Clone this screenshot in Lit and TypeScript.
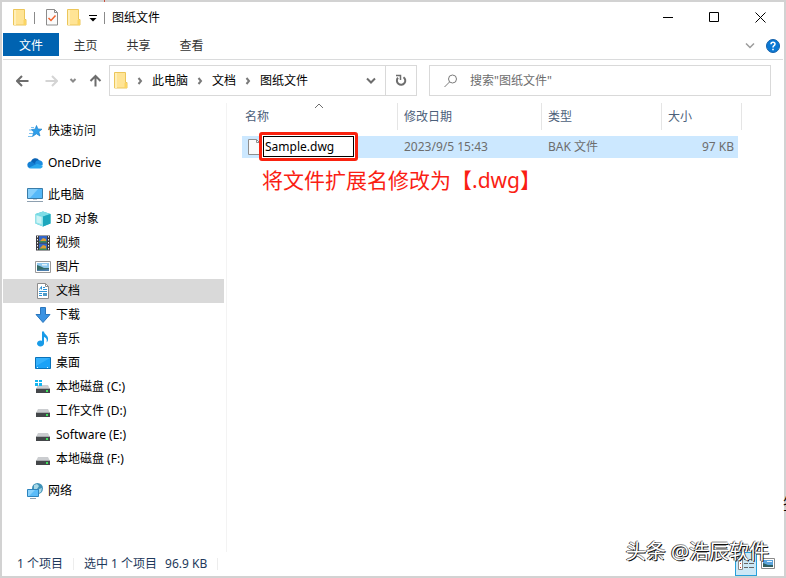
import { LitElement, html, css, svg, TemplateResult } from "lit";
import { customElement } from "lit/decorators.js";
import { classMap } from "lit/directives/class-map.js";

const icon = (w: number, h: number, body: unknown) =>
  html`<svg width=${w} height=${h} viewBox="0 0 ${w} ${h}" aria-hidden="true">${body}</svg>`;

const folder = icon(14, 17, svg`
  <path d="M0.5 0.5h11v10h1.5v5.5h-12.5z" fill="#ffe495" stroke="#ecc65a"/>
  <path d="M10.5 11h2.5v5h-2.5z" fill="#fbd563"/><path d="M1 1h2v15h-2z" fill="#ffefb8"/>`);

const checkDoc = icon(14, 17, svg`
  <path d="M1.5 0.5h8l3 3v12.5h-11z" fill="#fbfbfb" stroke="#8c8c8c"/>
  <path d="M9.5 0.5v3h3" fill="none" stroke="#8c8c8c"/>
  <path d="M3.500 9l2.500 2.500 4.500-5" fill="none" stroke="#f0632d" stroke-width="1.500"/>`);

const star = icon(16, 16, svg`
  <path d="M9.500 2.500l1.400 3.500 4.100.2-3.200 2.600 1.200 4.200-3.600-2.200-3.900 2.700 1.400-4.500-2.700-2.500 3.900-.3z" fill="#2f9fea" stroke="#1983d0" stroke-width=".7"/>
  <path d="M4 4.500h3M2 7h3M2 10.500h4M1 13.500h4" stroke="#7cc0ee"/>`);

const cloud = icon(16, 16, svg`
  <path d="M4 7a4.500 4.500 0 0 1 8.300-1.500l-2 5-8 .5z" fill="#0a63b5"/>
  <path d="M0.300 9.800a3.500 3.500 0 0 1 4.200-3.300l6 4-8 2.800a3.500 3.500 0 0 1-2.200-3.500z" fill="#1480d4"/>
  <path d="M8 8.500a4 4 0 0 1 4.500-3.200 4 4 0 0 1 3.200 4.500l-4 2z" fill="#1c8de0"/>
  <path d="M2 12.800l8-4 5.800 2a2.700 2.700 0 0 1-2.300 2.700h-10a3 3 0 0 1-1.500-.7z" fill="#29a8ee"/>`);

const computer = icon(16, 16, svg`
  <path d="M0.500 1.500h15v10h-15z" fill="#55b8f8" stroke="#3a7ca8"/>
  <path d="M1 2h10l-8 9h-2z" fill="#86cffb"/>
  <path d="M6 12.500h4" stroke="#c5cfd8"/><path d="M0 14.500h16" stroke="#8ea0b0"/>`);

const cube = icon(16, 16, svg`
  <path d="M8 0.500l7.500 2.500v9.500l-7.500 3-7.500-3v-9.500z" fill="#35bfd0"/>
  <path d="M8 0.500l7.500 2.500-7.500 2.500-7.500-2.500z" fill="#7fdde6"/>
  <path d="M0.500 3l7.500 2.500v10l-7.500-3z" fill="#8fe3ea"/><path d="M1.500 4.500l5 1.500v7l-5-1.500z" fill="#cdf3f5"/>
  <path d="M8 5.500l7.500-2.500v9.500l-7.500 3z" fill="#1da7bd"/>`);

const film = icon(16, 16, svg`
  <path d="M1 0.500h14v15h-14z" fill="#3a3a40"/><path d="M4 1h8v6.500h-8zM4 8.500h8v6.500h-8z" fill="#3466c6"/>
  <path d="M5 6l3-3 3 1v3h-6zM5 13l3-3 3 1v3h-6z" fill="#dc9d32"/><path d="M4 6h8v1.500h-8zM4 13.500h8v1.500h-8z" fill="#3b8758"/>
  <path d="M2.500 1v14M13.500 1v14" stroke="#f4f4f4" stroke-dasharray="1.500 1.500"/>`);

const picture = icon(16, 16, svg`
  <path d="M0.500 2.500h15v11h-15z" fill="#fff" stroke="#9a9a9a"/>
  <path d="M2 4h12v8h-12z" fill="#8fc8ee"/><path d="M2 6l4 1.500 3 1.500h5v3h-12z" fill="#356c68"/>
  <path d="M2 11l12-1v2h-12z" fill="#4d7fae"/><path d="M7 5h5v1.500h-5z" fill="#e5f4fc"/>`);

const documentIcon = icon(16, 16, svg`
  <path d="M2.500 0.500h8l3 3v12h-11z" fill="#fff" stroke="#8c8c8c"/><path d="M10.500 0.500v3h3" fill="none" stroke="#8c8c8c"/>
  <path d="M4.500 6.500l2-3v3M8 4.500h2M8 6.500h4M4 8.500h8M4 10.500h3M4 12.500h3" fill="none" stroke="#2c93d6"/>
  <path d="M8 10h4v3h-4z" fill="#4e9cc9"/>`);

const download = icon(16, 16, svg`
  <path d="M5.500 0.500h5v7h4.500l-7 8-7-8h4.500z" fill="#3b93e2" stroke="#2a76bd"/>`);

const music = icon(16, 16, svg`
  <path d="M7 0.500h2c0 3 5 4 4 8.500-.2 1-.8 2-1.500 2.500 1-3-.5-5-2.500-5.500v6.500a3.500 3 0 1 1-2-2.700z" fill="#189be8"/>`);

const desktop = icon(16, 16, svg`
  <path d="M0.500 2.500h15v11h-15z" fill="#1ba2f7" stroke="#0a72b9"/><path d="M1 3h14l-14 8z" fill="#35b1fc"/>
  <path d="M2 12.500h2M12 12.500h2" stroke="#d7f1ff" stroke-dasharray="1 1"/>`);

const driveBody = svg`
  <path d="M3 6h10l2 4h-14z" fill="#cbcdd0"/><path d="M1 10h14v4h-14z" fill="#44474a"/>
  <path d="M1 9.500h14" stroke="#a8abae"/><path d="M11 11h2v2h-2z" fill="#3fe05c"/>`;
const drive = icon(16, 16, driveBody);
const systemDrive = icon(16, 16, svg`${driveBody}
  <path d="M0 1h3v2h-3zM4 1h3v2h-3zM0 4h3v3h-3zM4 4h3v3h-3z" fill="#13b5ef"/>`);

const network = icon(16, 16, svg`
  <circle cx="10.500" cy="5.500" r="5.500" fill="#3f92b8"/><path d="M7 2l3-1 2 2-2 3-3 1zM12 6l3-1-1 4-2 1z" fill="#a9d8e6"/>
  <path d="M0.500 6.500h11v7h-11z" fill="#5bbcf9" stroke="#2c83bd"/><path d="M1 7h7l-6 6h-1z" fill="#8ad2fc"/>
  <path d="M3 15.500h6" stroke="#8ea0b0"/>`);

const chevronDown = icon(10, 8, svg`<path d="M1 1.500l4 4 4-4" fill="none" stroke="currentColor" stroke-width="2"/>`);
const smallChevron = icon(8, 6, svg`<path d="M1.500 1l2.500 2.500 2.500-2.500" fill="none" stroke="#8a8a8a" stroke-width="2"/>`);
const chevronRight = icon(6, 8, svg`<path d="M1.500 1l2.500 3-2.500 3" fill="none" stroke="#7a7a7a" stroke-width="2"/>`);
const arrowLeft = svg`<path d="M12.500 6h-11M6 1l-5 5 5 5" fill="none" stroke="currentColor" stroke-width="2"/>`;
const arrowRight = svg`<path d="M0.500 6h11M7 1l5 5-5 5" fill="none" stroke="currentColor" stroke-width="2"/>`;
const arrowUp = svg`<path d="M6.500 12.500v-11M1.500 7l5-5 5 5" fill="none" stroke="currentColor" stroke-width="2"/>`;

interface Place {
  label: string;
  icon: TemplateResult;
  child?: boolean;
  selected?: boolean;
}

const groups: Place[][] = [
  [{ label: "快速访问", icon: star }],
  [{ label: "OneDrive", icon: cloud }],
  [
    { label: "此电脑", icon: computer },
    { label: "3D 对象", icon: cube, child: true },
    { label: "视频", icon: film, child: true },
    { label: "图片", icon: picture, child: true },
    { label: "文档", icon: documentIcon, child: true, selected: true },
    { label: "下载", icon: download, child: true },
    { label: "音乐", icon: music, child: true },
    { label: "桌面", icon: desktop, child: true },
    { label: "本地磁盘 (C:)", icon: systemDrive, child: true },
    { label: "工作文件 (D:)", icon: drive, child: true },
    { label: "Software (E:)", icon: drive, child: true },
    { label: "本地磁盘 (F:)", icon: drive, child: true },
  ],
  [{ label: "网络", icon: network }],
];

@customElement("app-root")
export class AppRoot extends LitElement {
  static styles = css`
    :host {
      display: flex;
      position: relative;
      box-sizing: border-box;
      min-height: 100vh;
      padding: 2px;
      overflow: hidden;
      background: #d2d2d2;
      color: #000;
      font: 12px/16px "Noto Sans", "Noto Sans CJK SC", sans-serif;
    }
    * { box-sizing: border-box; }
    svg { display: block; flex: none; }
    button, input { font: inherit; color: inherit; border: 0; padding: 0; margin: 0; background: none; border-radius: 0; outline: 0; }
    button { display: flex; align-items: center; justify-content: center; }
    a { color: inherit; text-decoration: none; }
    .window { flex: 1; min-width: 0; display: flex; flex-direction: column; background: #fff; }

    .title { display: flex; align-items: center; height: 31px; padding: 0 1px 0 11px; }
    .quick { display: flex; align-items: center; }
    .rule { width: 1px; height: 12px; background: #8a8a8a; }
    .quick .rule { margin: 0 10px 0 7px; }
    .quick button + button { margin-left: 8px; }
    .quick .more { width: 8px; }
    .quick .rule.last { margin: 0 7px; }
    .title h1 { flex: 1; margin: 0; font: inherit; }
    .title .control { width: 46px; height: 30px; }

    .tabs { display: flex; height: 27px; border-bottom: 1px solid #dadbdc; margin: 0 1px; color: #333; }
    .tabs button { width: 53px; height: 23px; padding-top: 2px; }
    .tabs .file { width: 56px; background: #0063b1; color: #fff; }
    .tabs .space { flex: 1; }
    .tabs .collapse { width: 24px; color: #9b9b9b; }
    .tabs .help { width: 21px; }

    .address { display: flex; align-items: center; height: 43px; padding: 0 13px 2px; }
    .arrows { display: flex; align-items: center; justify-content: space-between; width: 94px; padding: 0 7px 0 1px; color: #6d6d6d; }
    .arrows .off { color: #d4d4d4; margin-left: 4px; }
    .arrows button { flex: none; }
    .box { display: flex; align-items: center; height: 31px; border: 1px solid #d9d9d9; min-width: 0; }
    .path { flex: 0 1 308px; padding-left: 4px; }
    .crumbs { display: flex; align-items: center; flex: 1; gap: 9px; white-space: nowrap; }
    .path .drop { width: 28px; height: 29px; color: #6d6d6d; }
    .path .refresh { width: 31px; height: 29px; border-left: 1px solid #d9d9d9; }
    .search { flex: 1; margin-left: 12px; padding: 0 14px; gap: 12px; }
    .search input { flex: 1; min-width: 0; color: #6d6d6d; }
    .search input::placeholder { color: #6d6d6d; opacity: 1; }

    .body { display: flex; flex: 1; }
    nav { width: 225px; flex: none; padding: 16px 2px 0 1px; border-right: 1px solid #f3f3f3; }
    nav ul { list-style: none; margin: 0 0 8px; padding: 0; }
    nav a { display: flex; align-items: center; gap: 5px; height: 24px; padding-left: 24px; }
    nav a.child { padding-left: 32px; }
    nav a.selected { background: #d9d9d9; }

    main { flex: 1; min-width: 0; padding-left: 15px; }
    table { border-collapse: collapse; table-layout: fixed; width: 500px; max-width: 100%; }
    .c-name { width: 156px; } .c-date { width: 144px; } .c-type { width: 120px; } .c-end { width: 4px; }
    th, td { padding: 0; font-weight: normal; text-align: left; }
    th { color: #4c607a; padding-bottom: 6px; position: relative; }
    th span { display: flex; align-items: center; height: 27px; padding-left: 6px; border-right: 1px solid #e5e5e5; }
    th:first-child span { padding-left: 3px; }
    .sort { position: absolute; top: 0; left: 72px; }
    td { height: 22px; color: #6d6d6d; padding-left: 6px; background: #cce8ff; }
    td.end { background: none; padding: 0; }
    td.size { text-align: right; padding-right: 4px; }
    .name { display: flex; align-items: center; position: relative; height: 22px; }
    .rename { position: absolute; left: 11px; top: -4px; display: flex; border: 3px solid #f9220f; border-radius: 3px; background: #fff; }
    .rename input { width: 91px; height: 21px; margin: 1px; border: 1px solid #000; padding: 0 1px; color: #000; }
    .note { margin: 8px 0 0 20px; color: #fa1e14; font-size: 21px; line-height: 28px; }

    footer { display: flex; align-items: center; height: 24px; padding: 0 5px 0 15px; color: #1e395b; }
    footer .rule { background: #ededed; margin: 0 10px; }
    footer .gap { width: 8px; }
    footer .space { flex: 1; }
    .view { width: 22px; height: 24px; }
    .view.on { background: #cce8f6; border: 1px solid #26a0da; }

    .watermark { position: absolute; right: 17px; bottom: 12px; font-size: 20px; line-height: 28px; color: #fff; text-shadow: 1px 1px 0 #111, -1px 0 0 #333, 0 -1px 0 #999; white-space: nowrap; }
    .behind { position: absolute; left: calc(100% - 3px); bottom: 64px; font-size: 16px; line-height: 20px; white-space: nowrap; }
    .behind-top { position: absolute; top: 0; left: 104px; width: 1px; height: 2px; background: #c8503c; }
  `;

  private place(p: Place) {
    return html`<li>
      <a href="#" class=${classMap({ child: !!p.child, selected: !!p.selected })}>${p.icon}<span>${p.label}</span></a>
    </li>`;
  }

  render() {
    return html`
      <div class="behind">签</div>
      <div class="behind-top"></div>
      <div class="window">
        <header class="title">
          <div class="quick">
            ${folder}<span class="rule"></span>
            <button aria-label="属性">${checkDoc}</button>
            <button aria-label="新建文件夹">${folder}</button>
            <button class="more" aria-label="自定义快速访问工具栏">
              ${icon(8, 8, svg`<path d="M0 1.500h8" stroke="#000"/><path d="M0.500 4h7l-3.500 3.500z"/>`)}
            </button>
            <span class="rule last"></span>
          </div>
          <h1>图纸文件</h1>
          <button class="control" aria-label="最小化">${icon(11, 11, svg`<path d="M0 5.500h10" stroke="#000"/>`)}</button>
          <button class="control" aria-label="最大化">${icon(11, 11, svg`<path d="M0.500 0.500h9v9h-9z" fill="none" stroke="#000"/>`)}</button>
          <button class="control" aria-label="关闭">${icon(11, 11, svg`<path d="M0.500 0.500l10 10M10.500 0.500l-10 10" stroke="#000"/>`)}</button>
        </header>

        <div class="tabs">
          <button class="file">文件</button>
          <button>主页</button><button>共享</button><button>查看</button>
          <span class="space"></span>
          <button class="collapse" aria-label="展开功能区">${icon(10, 8, svg`<path d="M1 1.500l4 4 4-4" fill="none" stroke="currentColor" stroke-width="1.500"/>`)}</button>
          <button class="help" aria-label="帮助">
            ${icon(14, 14, svg`<circle cx="7" cy="7" r="6.500" fill="#0a78d4" stroke="#1560a8"/>
              <path d="M5 5.200q0-2 2-2t2 1.800q0 1-1 1.700t-1 1.800" fill="none" stroke="#fff" stroke-width="1.500"/><path d="M6.200 9.800h1.600v1.500h-1.600z" fill="#fff"/>`)}
          </button>
        </div>

        <div class="address">
          <div class="arrows">
            <button aria-label="后退">${icon(13, 12, arrowLeft)}</button>
            <button class="off" aria-label="前进" disabled>${icon(13, 12, arrowRight)}</button>
            <button aria-label="最近位置">${smallChevron}</button>
            <button aria-label="上移">${icon(13, 13, arrowUp)}</button>
          </div>
          <div class="box path">
            <div class="crumbs">
              ${folder}${chevronRight}<a href="#">此电脑</a>${chevronRight}<a href="#">文档</a>${chevronRight}<a href="#">图纸文件</a>
            </div>
            <button class="drop" aria-label="以前的位置">${chevronDown}</button>
            <button class="refresh" aria-label="刷新">
              ${icon(12, 13, svg`<path d="M8.500 3.200a4.200 4.200 0 1 1-5.500.6" fill="none" stroke="#6d6d6d" stroke-width="2"/><path d="M1 1.500h4.500v4.500" fill="none" stroke="#6d6d6d" stroke-width="1.500"/>`)}
            </button>
          </div>
          <label class="box search">
            ${icon(14, 14, svg`<circle cx="8.500" cy="5" r="4" fill="none" stroke="#7b7b7b"/><path d="M5.500 8l-5 5" stroke="#7b7b7b"/>`)}
            <input type="text" aria-label="搜索" placeholder='搜索"图纸文件"' />
          </label>
        </div>

        <div class="body">
          <nav>${groups.map((g) => html`<ul>${g.map((p) => this.place(p))}</ul>`)}</nav>
          <main>
            <table>
              <colgroup><col class="c-name" /><col class="c-date" /><col class="c-type" /><col /><col class="c-end" /></colgroup>
              <thead>
                <tr>
                  <th><span>名称</span><div class="sort">${icon(10, 6, svg`<path d="M1 5l4-4 4 4" fill="none" stroke="#6d6d6d"/>`)}</div></th>
                  <th><span>修改日期</span></th>
                  <th><span>类型</span></th>
                  <th colspan="2"><span>大小</span></th>
                </tr>
              </thead>
              <tbody>
                <tr>
                  <td>
                    <div class="name">
                      ${icon(12, 16, svg`<path d="M0.500 0.500h8l3 3v12h-11z" fill="#fafafa" stroke="#8e8e8e"/><path d="M8.500 0.500v3h3" fill="none" stroke="#8e8e8e"/>`)}
                      <div class="rename"><input type="text" aria-label="文件名" .value=${"Sample.dwg"} /></div>
                    </div>
                  </td>
                  <td>2023/9/5 15:43</td>
                  <td>BAK 文件</td>
                  <td class="size">97 KB</td>
                  <td class="end"></td>
                </tr>
              </tbody>
            </table>
            <p class="note">将文件扩展名修改为【.dwg】</p>
          </main>
        </div>

        <footer>
          <span>1 个项目</span><span class="rule"></span>
          <span>选中 1 个项目</span><span class="gap"></span><span>96.9 KB</span><span class="rule"></span>
          <span class="space"></span>
          <button class="view on" aria-label="详细信息">
            ${icon(16, 16, svg`<path d="M0.500 1.500h4v12h-4z" fill="#fff" stroke="#8a8a8a"/><path d="M2.500 3v1M2.500 7v1M2.500 11v1" stroke="#c0392b"/>
              <path d="M6 3.500h4M11 3.500h5M6 7.500h4M11 7.500h5M6 11.500h4M11 11.500h5" stroke="#666"/>`)}
          </button>
          <button class="view" aria-label="大图标">
            ${icon(14, 12, svg`<path d="M0.500 0.500h13v10h-13z" fill="#fff" stroke="#8a8a8a"/><path d="M2 2h10v7h-10z" fill="#5ba4dc"/><path d="M2 5l5 2h5v2h-10z" fill="#2f5f62"/><path d="M6 3h5v1h-5z" fill="#e9f5fd"/>`)}
          </button>
        </footer>
      </div>
      <div class="watermark">头条 @浩辰软件</div>
    `;
  }
}
